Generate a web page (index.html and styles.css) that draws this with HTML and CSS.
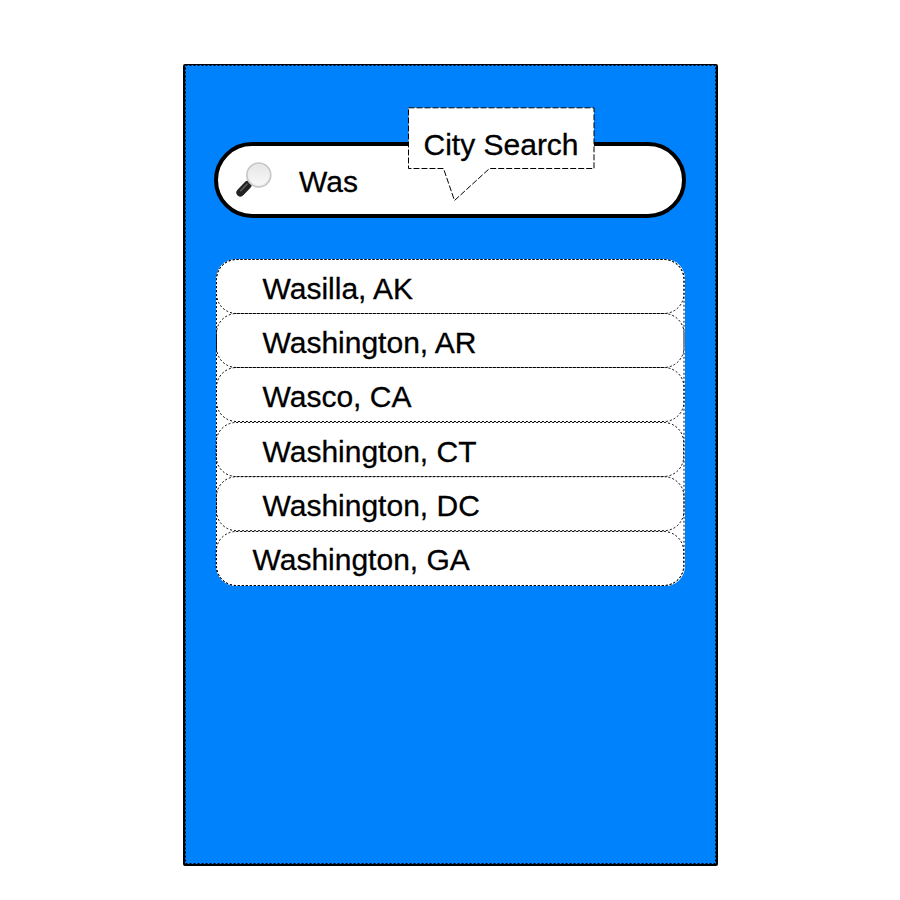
FILE: index.html
```html
<!DOCTYPE html>
<html lang="en">
<head>
<meta charset="utf-8">
<title>City Search</title>
<link rel="stylesheet" href="styles.css">
</head>
<body>
<main class="panel">
  <svg class="panel-dots" width="535" height="802" aria-hidden="true"><rect x="2.5" y="1.5" width="530" height="798"/></svg>
  <div class="search">
    <svg class="glass" width="40" height="40" viewBox="0 0 40 40" aria-hidden="true">
      <defs>
        <linearGradient id="lens" x1="0" y1="0" x2="0" y2="1"><stop offset="0" stop-color="#e5e5e5"/><stop offset="1" stop-color="#fafafa"/></linearGradient>
      </defs>
      <path d="M14 25l4-4" stroke="#999" stroke-width="4"/>
      <path d="M6.4 32.6L13.6 25" stroke="#222" stroke-width="8" stroke-linecap="round"/>
      <path d="M6.8 30.6L13 24.2" stroke="#5a5a5a" stroke-width="1.8" stroke-linecap="round"/>
      <circle cx="24.8" cy="15" r="11.9" fill="url(#lens)" stroke="#c8c8c8" stroke-width="1.8"/>
      <circle cx="24.8" cy="15" r="10.5" fill="none" stroke="#ececec" stroke-width="1"/>
    </svg>
    <span class="query">Was</span>
    <div class="callout">
      <svg class="bubble" width="188" height="96" aria-hidden="true"><path d="M1.5 1.8H187V62.5H82.5L47.5 94.5L36.5 62.5H1.5Z"/></svg>
      <span class="callout-text">City Search</span>
    </div>
  </div>
  <ul class="results">
    <li class="row"><svg class="outline frame" aria-hidden="true"><rect x=".5" y=".5" width="467.5" height="326" rx="20"/></svg><svg class="outline" aria-hidden="true"><rect x=".5" y=".5" width="467.5" height="54" rx="20"/></svg><span>Wasilla, AK</span></li>
    <li class="row"><svg class="outline" aria-hidden="true"><rect x=".5" y=".5" width="467.5" height="54" rx="20"/></svg><span>Washington, AR</span></li>
    <li class="row tall"><svg class="outline" aria-hidden="true"><rect x=".5" y=".5" width="467.5" height="54" rx="20"/></svg><span>Wasco, CA</span></li>
    <li class="row"><svg class="outline" aria-hidden="true"><rect x=".2" y=".5" width="467.5" height="54" rx="20"/></svg><span>Washington, CT</span></li>
    <li class="row tall"><svg class="outline" aria-hidden="true"><rect x=".5" y=".7" width="467.5" height="54" rx="20"/></svg><span>Washington, DC</span></li>
    <li class="row last"><svg class="outline" aria-hidden="true"><rect x=".2" y=".5" width="467.5" height="54" rx="20"/></svg><span>Washington, GA</span></li>
  </ul>
</main>
</body>
</html>
```
FILE: styles.css
```css
body {
  margin: 0;
  background: #fff;
  color: #000;
  font: 30px/36px "Liberation Sans", Arial, sans-serif;
  -webkit-text-stroke: 0.3px #000;
}

.panel {
  position: relative;
  box-sizing: border-box;
  width: 535px;
  height: 802px;
  margin: 64px 0 0 183px;
  padding: 77px 31px 0 29px;
  border: 2px solid #000;
  border-top-width: 1px;
  border-radius: 2px;
  background: #0082fc;
}

.panel-dots {
  position: absolute;
  top: -1px;
  left: -2px;
  fill: none;
  stroke: #000;
  stroke-dasharray: 2 2;
}

.search {
  position: relative;
  box-sizing: border-box;
  display: flex;
  width: 472px;
  height: 76px;
  padding: 14px 0 0 16px;
  border: 4px solid #000;
  border-radius: 38px;
  background: #fff;
}

.query {
  margin: 4px 0 0 25px;
}

.callout {
  position: absolute;
  top: -40px;
  left: 189px;
  width: 188px;
  height: 96px;
}

.bubble {
  position: absolute;
  top: 0;
  left: 0;
  fill: #fff;
  stroke: #000;
  stroke-width: 1;
  stroke-dasharray: 6 2;
}

.callout-text {
  position: relative;
  display: block;
  padding: 21px 0 0 16.5px;
  white-space: nowrap;
}

.results {
  width: 468.5px;
  height: 327px;
  margin: 41px 0 0 2px;
  padding: 0;
  list-style: none;
  border-radius: 20px;
  background: #fff;
}

.row {
  position: relative;
  box-sizing: border-box;
  height: 54px;
  padding: 12px 0 0 46.5px;
}

.row.tall {
  height: 55px;
}

.row.last {
  padding: 11px 0 0 36.5px;
}

.outline {
  position: absolute;
  top: 0;
  left: 0;
  width: 470px;
  height: 56px;
  overflow: visible;
  fill: none;
  stroke: #000;
  stroke-dasharray: 2 2;
}

.outline.frame {
  height: 327px;
}
```
